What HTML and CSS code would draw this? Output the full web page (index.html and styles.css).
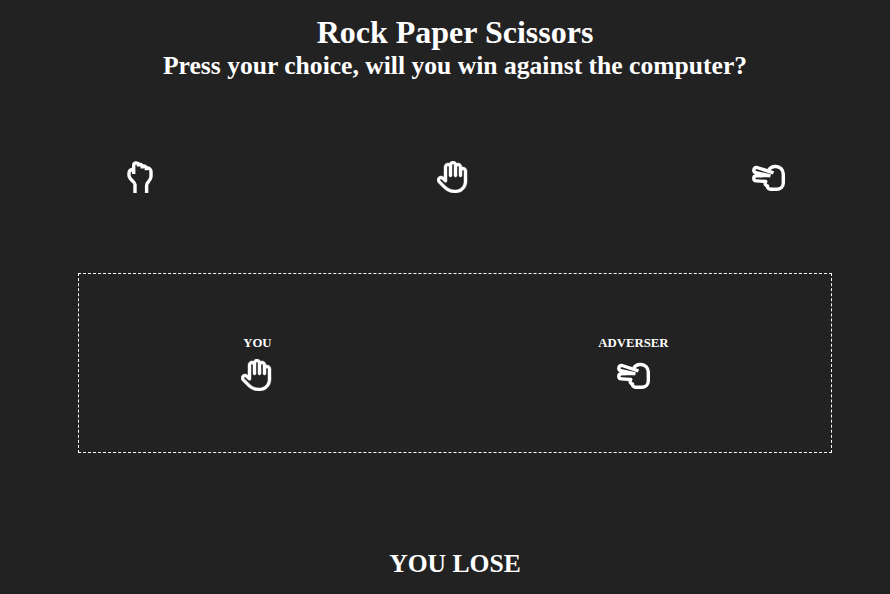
FILE: index.html
```html
<!DOCTYPE html>
<html lang="en">
<head>
<meta charset="utf-8">
<title>Rock Paper Scissors</title>
<link rel="stylesheet" href="styles.css">
</head>
<body>
<svg class="defs" aria-hidden="true">
  <symbol id="rock" viewBox="0 0 26 32">
    <path class="line" d="M8 32V23.500C8 20.500 2 18.500 2 14.500V12.500C2 10 3.800 8.500 6.300 8.300M6.700 13V4.300C6.700 1.500 10 1.200 11.400 3.300V5.500M11.400 3.300C13 2.900 14.600 3.700 15.200 5.200V7.500M15.200 5.200C17 4.700 18.700 5.500 19.300 7.200V9.300M19.300 7.200C22 6.500 24 8.300 24 10.500V15.500C24 20 19.600 20.500 19.600 24.500V32"/>
  </symbol>
  <symbol id="paper" viewBox="0 0 512 512">
    <path class="hand" d="M256 0c-25.300 0-47.200 14.700-57.600 36c-7-2.600-14.500-4-22.400-4c-35.300 0-64 28.700-64 64V261.500l-2.700-2.700c-25-25-65.500-25-90.500 0s-25 65.500 0 90.500L106.500 437c48 48 113.100 75 181 75H296h8c1.500 0 3-.1 4.500-.4c91.700-6.200 165-79.400 171.100-171.100c.3-1.500 .4-3 .4-4.500V160c0-35.300-28.700-64-64-64c-5.500 0-10.900 .7-16 2V96c0-35.300-28.700-64-64-64c-7.900 0-15.400 1.400-22.400 4C303.200 14.700 281.300 0 256 0zM240 96V64c0-8.800 7.200-16 16-16s16 7.200 16 16V232c0 13.300 10.700 24 24 24s24-10.700 24-24V96c0-8.800 7.200-16 16-16s16 7.200 16 16V232c0 13.300 10.700 24 24 24s24-10.700 24-24V160c0-8.800 7.200-16 16-16s16 7.200 16 16V332.900c-.1 .6-.1 1.300-.2 1.900c-3.400 69.700-59.300 125.600-129 129c-.6 0-1.300 .1-1.900 .2H287.500c-55.200 0-108.100-21.900-147.100-60.900L52.700 315.300c-6.200-6.200-6.200-16.400 0-22.600s16.400-6.200 22.600 0L119 336.400c6.900 6.900 17.200 8.900 26.200 5.200s14.800-12.500 14.800-22.200V96c0-8.800 7.200-16 16-16s16 7.200 16 16V232c0 13.300 10.700 24 24 24s24-10.700 24-24V96z"/>
  </symbol>
  <symbol id="scissors" viewBox="0 0 33 32">
    <path class="line" d="M21.500 11.800L5 6.500C1.400 5.800.700 11 4 11.700L18.500 14.800M16 14.400L4.200 14.700C.9 15 1 19.700 4.400 19.900L13.800 20.500C12.500 22.500 13.200 24.700 15.500 25C15.200 27 16.800 28.200 18.500 28.200H24.500C28.500 28.200 31.300 25.500 31.300 22V13C31.300 8.800 28 5.500 24 5.500H22.500C20.300 5.500 18.600 6.500 16.700 8.700"/>
  </symbol>
</svg>
<header>
  <h1>Rock Paper Scissors</h1>
  <h2>Press your choice, will you win against the computer?</h2>
</header>
<main>
  <div class="choices">
    <button aria-label="Rock"><svg class="rock"><use href="#rock"/></svg></button>
    <button aria-label="Paper"><svg class="icon"><use href="#paper"/></svg></button>
    <button aria-label="Scissors"><svg class="scissors"><use href="#scissors"/></svg></button>
  </div>
  <section class="arena">
    <div class="player"><h3>YOU</h3><svg class="icon"><use href="#paper"/></svg></div>
    <div class="player"><h3>ADVERSER</h3><svg class="scissors"><use href="#scissors"/></svg></div>
  </section>
  <p class="result">YOU LOSE</p>
</main>
</body>
</html>
```
FILE: styles.css
```css
* { box-sizing: border-box; margin: 0; padding: 0; }
body {
  height: 594px;
  padding: 14px 0 0 20px;
  overflow: hidden;
  background: #222;
  color: #fff;
  font-family: "Liberation Serif", "Times New Roman", serif;
  text-align: center;
}
.defs { display: none; }
h1 { font-size: 32px; line-height: 37px; }
h2 { font-size: 25.6px; line-height: 29px; }
svg { display: block; fill: #fff; }
.line {
  fill: none;
  stroke: #fff;
  stroke-width: 3.4;
  stroke-linejoin: round;
}
.hand { stroke: #fff; stroke-width: 7; }
.icon { width: 32px; height: 32px; }
.rock { width: 26px; height: 32px; }
.scissors { width: 33px; height: 32px; }
button { border: 0; background: none; }
main { width: 754px; margin: 0 auto; }
.choices {
  display: flex;
  justify-content: space-between;
  margin-top: 81px;
  padding: 0 47px 0 49px;
}
.arena {
  display: flex;
  justify-content: space-around;
  height: 180px;
  margin-top: 80px;
  padding: 62px 0 0;
  border: 1px dashed #fff;
}
.player {
  display: flex;
  flex-direction: column;
  align-items: center;
  gap: 8px;
}
h3 { font-size: 12.8px; line-height: 15px; }
.result { margin-top: 96px; font-size: 25.6px; font-weight: bold; line-height: 29px; }
```
